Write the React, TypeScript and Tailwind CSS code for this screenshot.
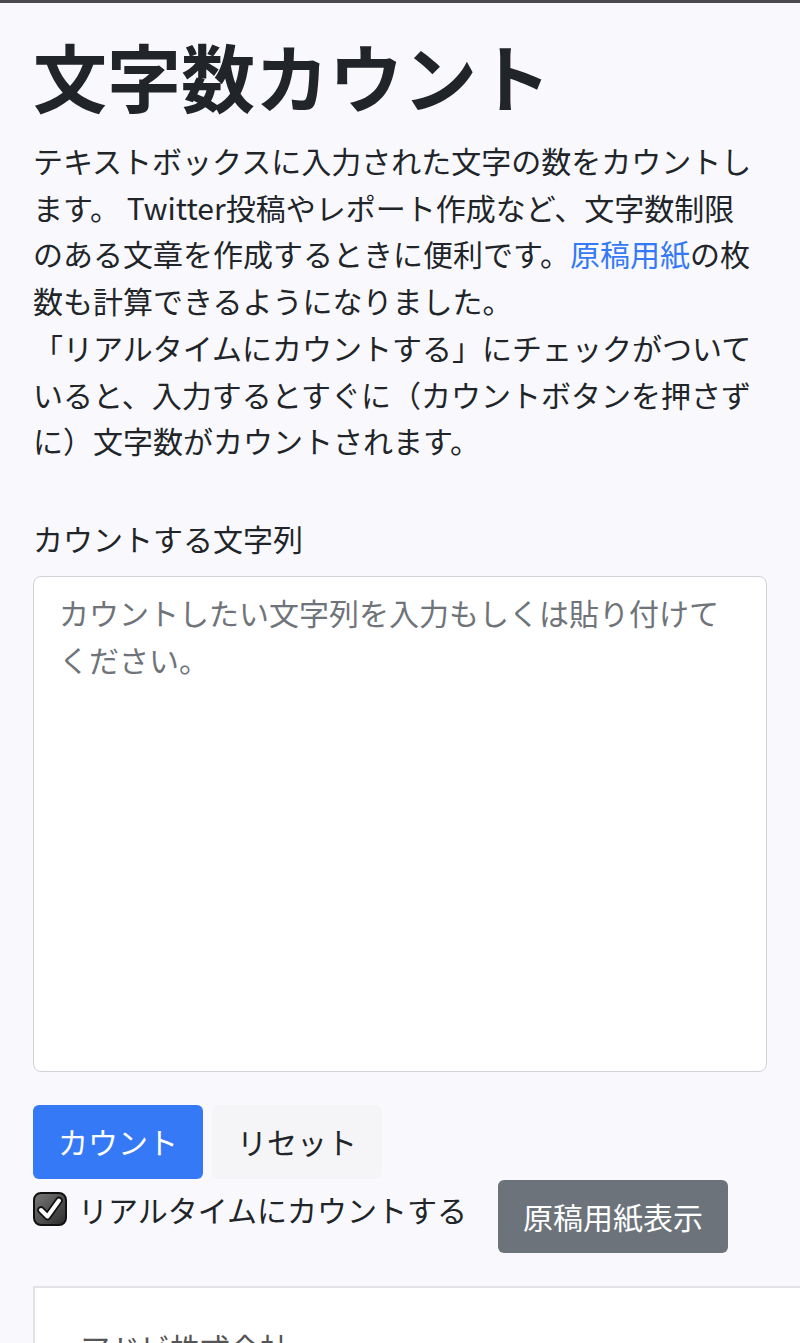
import { useState } from "react";

function CheckIcon() {
  return (
    <svg width="34" height="34" viewBox="0 0 34 34" aria-hidden>
      <defs>
        <linearGradient id="cbg" x1="0" y1="0" x2="1" y2="1">
          <stop offset="0" stopColor="#7a7a7a" />
          <stop offset="1" stopColor="#2b2b2b" />
        </linearGradient>
      </defs>
      <rect x="1" y="1" width="32" height="32" rx="7" fill="url(#cbg)" stroke="#111" strokeWidth="2" />
      <path d="M8 18 L14.5 24.5 L26 8.5" fill="none" stroke="#111" strokeWidth="7.5" strokeLinecap="round" strokeLinejoin="round" />
      <path d="M8 18 L14.5 24.5 L26 8.5" fill="none" stroke="#fff" strokeWidth="4" strokeLinecap="round" strokeLinejoin="round" />
    </svg>
  );
}

export default function App() {
  const [text, setText] = useState("");

  return (
    <div className="min-h-screen overflow-hidden border-t-[3px] border-[#4a4a4f] bg-[#f9f9fd] font-['Noto_Sans_CJK_JP','Noto_Sans',sans-serif] text-[#212529]">
      <div className="px-[33px] pt-[27px]">
        <h1 className="text-[74px] font-bold leading-[89px]">文字数カウント</h1>

        <p className="mt-[18px] text-[30px] leading-[46.7px]">
          テキストボックスに入力された文字の数をカウントし<br />
          ます。 Twitter投稿やレポート作成など、文字数制限<br />
          のある文章を作成するときに便利です。<a href="#" className="text-[#3579f6]">原稿用紙</a>の枚<br />
          数も計算できるようになりました。<br />
          「リアルタイムにカウントする」にチェックがついて<br />
          いると、入力するとすぐに（カウントボタンを押さず<br />
          に）文字数がカウントされます。
        </p>

        <label htmlFor="count-text" className="mt-[51px] block text-[30px] leading-[46px]">
          カウントする文字列
        </label>
        <textarea
          id="count-text"
          value={text}
          onChange={(e) => setText(e.target.value)}
          placeholder="カウントしたい文字列を入力もしくは貼り付けてください。"
          className="mt-[15px] block h-[496px] w-full resize-none rounded-[8px] border border-[#cfd3d8] bg-white px-[25px] py-[12px] text-[30px] leading-[47px] outline-none placeholder:text-[#6f747a]"
        />

        <div className="mt-[33px] flex gap-[9px]">
          <button className="h-[74px] rounded-[6px] bg-[#3579f6] px-[25px] text-[30px] text-white">
            カウント
          </button>
          <button onClick={() => setText("")} className="h-[74px] rounded-[6px] bg-[#f5f5f8] px-[25px] text-[30px] text-[#212529]">
            リセット
          </button>
        </div>

        <div className="mt-[1px] flex items-start">
          <label className="mt-[6px] flex items-center gap-[11px] text-[30px] leading-[46px]">
            <CheckIcon />
            リアルタイムにカウントする
          </label>
          <button className="ml-[31px] h-[73px] rounded-[6px] bg-[#6c737b] px-[25px] text-[30px] text-white">
            原稿用紙表示
          </button>
        </div>

        <div className="mt-[33px] mr-[-40px] h-[200px] border-l-2 border-t-2 border-[#e3e3e7] bg-white pl-[45px] pt-[36px] text-[30px] leading-[46px] text-[#555]">
          アドビ株式会社
        </div>
      </div>
    </div>
  );
}
